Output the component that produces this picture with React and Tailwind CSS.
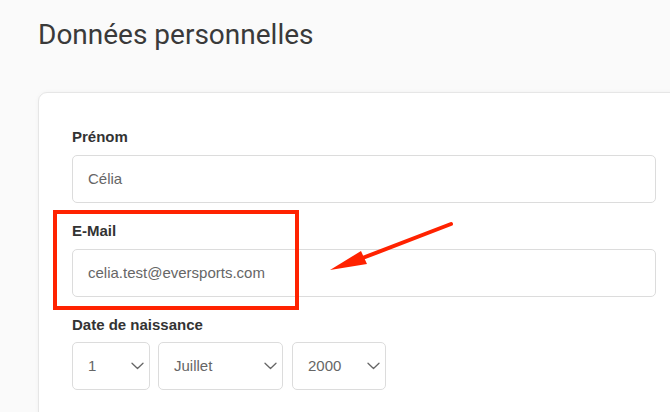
import React from "react";

function Chevron() {
  return (
    <svg width="13" height="8" viewBox="0 0 13 8" fill="none" className="shrink-0">
      <path d="M1 1.2 L6.5 6.5 L12 1.2" stroke="#666" strokeWidth="1.3" strokeLinecap="round" strokeLinejoin="round" />
    </svg>
  );
}

function Select({ value, w }) {
  return (
    <div className={`${w} h-[48px] border border-[#dcdcdc] rounded-[5px] bg-white flex items-center justify-between pl-[15px] pr-[5px] text-[15px] text-[#666]`}>
      <span>{value}</span>
      <Chevron />
    </div>
  );
}

export default function App() {
  return (
    <div className="relative w-[670px] h-[412px] overflow-hidden bg-[#fafafa]" style={{ fontFamily: '"Liberation Sans", Arial, sans-serif' }}>
      <div className="pl-[38px] pt-[17px]">
        <h1 className="text-[28px] leading-[36px] text-[#3a3a3a] font-normal" style={{ fontFamily: 'Roboto, "Noto Sans", sans-serif' }}>
          Données personnelles
        </h1>
        <div className="mt-[39px] w-[680px] h-[400px] bg-white border border-[#e6e6e6] rounded-[9px] shadow-[0_0_4px_rgba(0,0,0,0.04)] pl-[33px] pt-[35px]">
          <div className="text-[15px] leading-[18px] font-bold text-[#333]">Prénom</div>
          <div className="mt-[9px] w-[584px] h-[48px] border border-[#dcdcdc] rounded-[5px] flex items-center pl-[15px] text-[15px] text-[#666]">
            Célia
          </div>
          <div className="mt-[19px] text-[15px] leading-[18px] font-bold text-[#333]">E-Mail</div>
          <div className="mt-[9px] w-[584px] h-[48px] border border-[#dcdcdc] rounded-[5px] flex items-center pl-[15px] text-[15px] text-[#666]">
            celia.test@eversports.com
          </div>
          <div className="mt-[19px] text-[15px] leading-[18px] font-bold text-[#333]">Date de naissance</div>
          <div className="mt-[8px] flex">
            <Select value="1" w="w-[78px]" />
            <div className="ml-[8px]">
              <Select value="Juillet" w="w-[125px]" />
            </div>
            <div className="ml-[9px]">
              <Select value="2000" w="w-[94px]" />
            </div>
          </div>
        </div>
      </div>

      <div className="absolute left-[53px] top-[210px] w-[246px] h-[100px] border-[4px] border-[#ff2200]" />

      <svg className="absolute left-0 top-0" width="670" height="412" viewBox="0 0 670 412">
        <line x1="451" y1="224" x2="360" y2="259" stroke="#ff2200" strokeWidth="4" strokeLinecap="round" />
        <polygon points="330,270 361,251 367,264" fill="#ff2200" />
      </svg>
    </div>
  );
}
